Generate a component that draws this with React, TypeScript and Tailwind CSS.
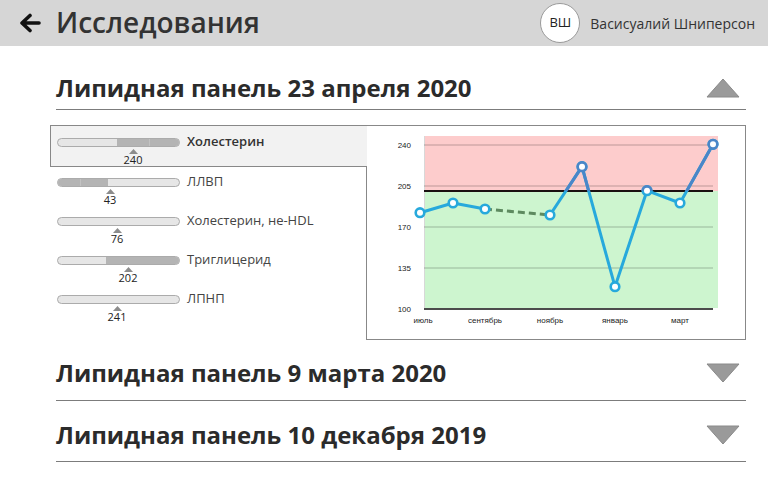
import React from "react";

const FONT = { fontFamily: '"Open Sans", "Noto Sans", sans-serif' };

function Tri({ up }: { up: boolean }) {
  return (
    <svg width="34" height="20" viewBox="0 0 34 20" className="mr-[6px]">
      {up ? (
        <polygon points="1,19 17,1 33,19" fill="#9a9a9a" stroke="#8a8a8a" strokeWidth="1" />
      ) : (
        <polygon points="1,1 33,1 17,19" fill="#9a9a9a" stroke="#8a8a8a" strokeWidth="1" />
      )}
    </svg>
  );
}

type Row = {
  label: string;
  value: string;
  marker: number;
  dark?: [number, number];
  divider?: number;
  selected?: boolean;
};

const rows: Row[] = [
  { label: "Холестерин", value: "240", marker: 76, dark: [60, 123], divider: 92, selected: true },
  { label: "ЛЛВП", value: "43", marker: 53, dark: [0, 51], divider: 23 },
  { label: "Холестерин, не-HDL", value: "76", marker: 60 },
  { label: "Триглицерид", value: "202", marker: 71, dark: [49, 123] },
  { label: "ЛПНП", value: "241", marker: 60 },
];

function Track({ r }: { r: Row }) {
  return (
    <div className="relative w-[123px] h-[9px] rounded-full border border-[#ababab] bg-[#e6e6e6] overflow-hidden shrink-0">
      {r.dark && (
        <div
          className="absolute top-0 bottom-0 bg-[#b4b4b4]"
          style={{ left: r.dark[0] - 1, width: r.dark[1] - r.dark[0] }}
        />
      )}
      {r.divider !== undefined && (
        <div className="absolute top-0 bottom-0 w-px bg-[#c2c2c2]" style={{ left: r.divider - 1 }} />
      )}
    </div>
  );
}

function ListRow({ r }: { r: Row }) {
  const inner = (
    <div className="flex flex-col">
      <div className="flex items-center h-[9px]">
        <Track r={r} />
        <span
          className={
            "ml-[7px] text-[13px] leading-[16px] -mt-[3px] whitespace-nowrap " +
            (r.selected ? "font-semibold text-[#333]" : "text-[#444]")
          }
        >
          {r.label}
        </span>
      </div>
      <div className="relative h-[18px] w-[123px]">
        <svg
          width="9"
          height="5"
          viewBox="0 0 9 5"
          className="absolute top-[2px]"
          style={{ left: r.marker - 4.5 }}
        >
          <polygon points="0,5 4.5,0 9,5" fill="#8c8c8c" />
        </svg>
        <span
          className="absolute top-[7px] text-[11px] leading-[12px] text-[#222] w-[30px] text-center"
          style={{ left: r.marker - 15 }}
        >
          {r.value}
        </span>
      </div>
    </div>
  );
  if (r.selected) {
    return (
      <div className="relative z-10 -mr-px h-[42px] border border-r-0 border-[#888] bg-[#f2f2f2] pl-[6px] pt-[12px]">
        {inner}
      </div>
    );
  }
  return <div className="h-[39px] pl-[7px] pt-[11px]">{inner}</div>;
}

const pts: [number, number][] = [
  [53, 86.7],
  [86, 77],
  [118, 83],
  [183, 89],
  [215, 40.7],
  [248, 160.7],
  [280, 64.7],
  [313, 77],
  [346, 18.3],
];

function Chart() {
  const solidA = pts.slice(0, 3).map((p) => p.join(",")).join(" ");
  const solidB = pts.slice(3).map((p) => p.join(",")).join(" ");
  const lines = (color: string) => (
    <g fill="none" stroke={color} strokeWidth="3" strokeLinejoin="round">
      <polyline points={solidA} />
      <polyline points={solidB} />
    </g>
  );
  const circles = (color: string) => (
    <g fill="#fff" stroke={color} strokeWidth="2.6">
      {pts.map((p, i) => (
        <circle key={i} cx={p[0]} cy={p[1]} r="4.3" />
      ))}
    </g>
  );
  return (
    <svg width="378" height="213" viewBox="0 0 378 213" style={{ fontFamily: '"Liberation Sans", Arial, sans-serif' }}>
      <defs>
        <clipPath id="top">
          <rect x="0" y="0" width="378" height="65" />
        </clipPath>
      </defs>
      <rect x="57" y="10" width="294" height="55" fill="#fdcccc" />
      <rect x="57" y="65" width="294" height="117" fill="#cdf5cf" />
      <line x1="57.5" y1="10" x2="57.5" y2="182" stroke="#d8d8d8" strokeWidth="1" />
      {[19, 60, 101, 142].map((y) => (
        <line key={y} x1="57" y1={y} x2="346" y2={y} stroke="#000" strokeOpacity="0.25" strokeWidth="1" />
      ))}
      <line x1="57" y1="65" x2="346" y2="65" stroke="#1a1010" strokeWidth="2.2" />
      <line x1="57" y1="183" x2="346" y2="183" stroke="#111" strokeWidth="1.4" />
      {[
        ["240", 19],
        ["205", 60],
        ["170", 101],
        ["135", 142],
        ["100", 183],
      ].map(([t, y]) => (
        <text key={t} x="44" y={(y as number) + 3} fontSize="8" textAnchor="end" fill="#222">
          {t}
        </text>
      ))}
      {[
        ["июль", 56],
        ["сентябрь", 118],
        ["ноябрь", 183],
        ["январь", 248],
        ["март", 313],
      ].map(([t, x]) => (
        <text key={t} x={x} y="197" fontSize="8" textAnchor="middle" fill="#222">
          {t}
        </text>
      ))}
      <line x1="118" y1="83" x2="183" y2="89" stroke="#5e8a60" strokeWidth="3" strokeDasharray="7 4" />
      {lines("#27a9dc")}
      <g clipPath="url(#top)">{lines("#4a86c8")}</g>
      {circles("#27a9dc")}
      <g clipPath="url(#top)">{circles("#4a86c8")}</g>
    </svg>
  );
}

export default function App() {
  return (
    <div className="w-[768px] h-[487px] bg-white overflow-hidden text-[#333]" style={FONT}>
      <header className="h-[46px] bg-[#d6d6d6] flex items-center">
        <svg width="22" height="20" viewBox="0 0 22 20" className="ml-[19px]">
          <path d="M20 10H4M11 2.5L3 10l8 7.5" fill="none" stroke="#111" strokeWidth="3.6" strokeLinecap="round" strokeLinejoin="round" />
        </svg>
        <h1 className="ml-[15px] text-[28px] leading-[36px] font-semibold text-[#333] -mt-[2px]">Исследования</h1>
        <div className="ml-auto flex items-center mr-[13px]">
          <div className="w-[40px] h-[40px] rounded-full bg-white border border-[#9a9a9a] flex items-center justify-center text-[13px] text-[#222]">
            ВШ
          </div>
          <span className="ml-[10px] text-[14px] text-[#333]">Васисуалий Шниперсон</span>
        </div>
      </header>

      <div className="ml-[56px] w-[690px]">
        <div className="flex items-center justify-between border-b border-[#7c7c7c] pt-[26px] pb-[5px]">
          <h2 className="text-[24px] leading-[32px] font-bold text-[#2b2b2b]">Липидная панель 23 апреля 2020</h2>
          <Tri up />
        </div>
      </div>

      <div className="flex ml-[50px] mt-[15px] w-[696px]">
        <div className="w-[316px] flex flex-col">
          {rows.map((r) => (
            <ListRow key={r.label} r={r} />
          ))}
        </div>
        <div className="w-[380px] h-[215px] border border-[#888] bg-white">
          <Chart />
        </div>
      </div>

      <div className="ml-[56px] w-[690px]">
        <div className="flex items-center justify-between border-b border-[#7c7c7c] pt-[17px] pb-[11px]">
          <h2 className="text-[24px] leading-[32px] font-bold text-[#2b2b2b]">Липидная панель 9 марта 2020</h2>
          <Tri up={false} />
        </div>
        <div className="flex items-center justify-between border-b border-[#7c7c7c] pt-[18px] pb-[10px]">
          <h2 className="text-[24px] leading-[32px] font-bold text-[#2b2b2b]">Липидная панель 10 декабря 2019</h2>
          <Tri up={false} />
        </div>
      </div>
    </div>
  );
}
